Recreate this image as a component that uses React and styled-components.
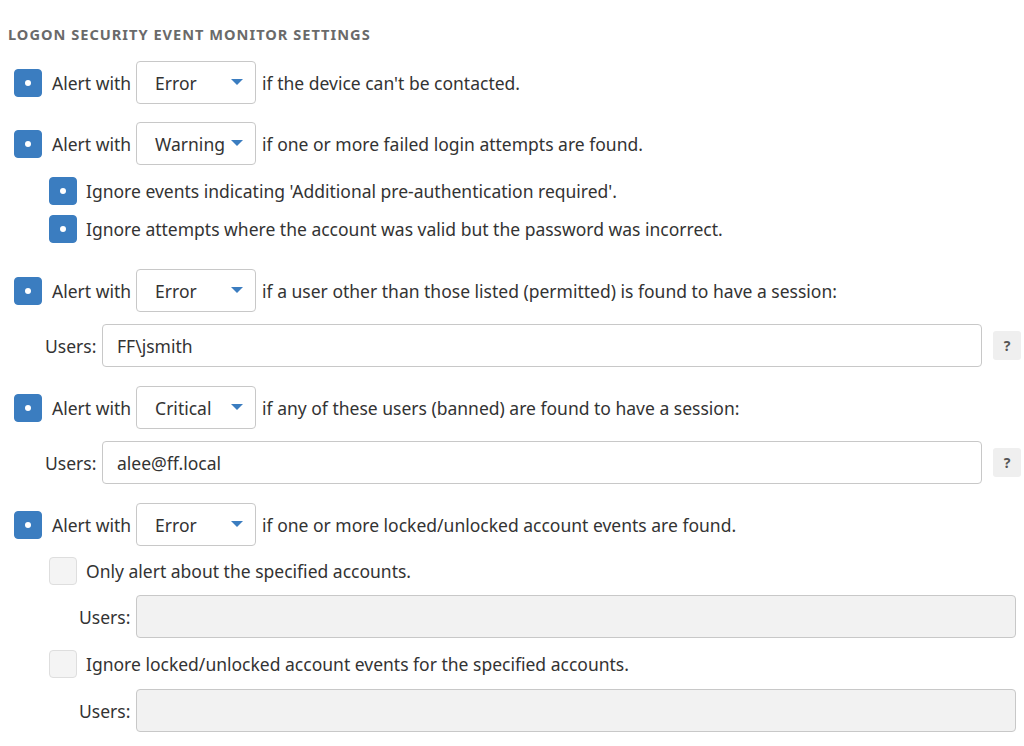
import React from "react";
import styled, { createGlobalStyle } from "styled-components";

const Global = createGlobalStyle`
  html, body { margin: 0; padding: 0; background: #fff; }
  body { font-family: "Noto Sans", "Open Sans", Arial, sans-serif; color: #333; }
`;

const Page = styled.div`
  width: 1024px;
  height: 746px;
  box-sizing: border-box;
  padding: 26px 0 0 8px;
  display: flex;
  flex-direction: column;
  overflow: hidden;
`;

const Heading = styled.h2`
  margin: 0;
  font-size: 14.6px;
  line-height: 16px;
  font-weight: 700;
  letter-spacing: 1px;
  color: #6a6a6a;
  text-transform: uppercase;
`;

const Row = styled.div`
  display: flex;
  align-items: center;
  height: ${(p) => p.$h || 43}px;
  margin-top: ${(p) => p.$mt || 0}px;
  padding-left: ${(p) => p.$indent || 0}px;
  font-size: 17.5px;
  white-space: nowrap;
`;

const Box = styled.span`
  width: 28px;
  height: 28px;
  box-sizing: border-box;
  border-radius: 4px;
  flex: none;
  display: flex;
  align-items: center;
  justify-content: center;
  background: ${(p) => (p.$checked ? "#3b7dc0" : "#f4f4f4")};
  border: 1px solid ${(p) => (p.$checked ? "#3b7dc0" : "#dedede")};
  &::after {
    content: "";
    display: ${(p) => (p.$checked ? "block" : "none")};
    width: 6px;
    height: 6px;
    border-radius: 50%;
    background: #fff;
  }
`;

const Label = styled.span`
  margin-left: ${(p) => p.$ml ?? 10}px;
`;

const Select = styled.div`
  width: 120px;
  height: 43px;
  box-sizing: border-box;
  border: 1px solid #c8c8c8;
  border-radius: 4px;
  background: #fff;
  display: flex;
  align-items: center;
  justify-content: space-between;
  padding: 0 12px 0 18px;
  flex: none;
  margin: 0 6px 0 5px;
`;

const Caret = styled.span`
  width: 0;
  height: 0;
  border-left: 6px solid transparent;
  border-right: 6px solid transparent;
  border-top: 6px solid #3b7dc0;
  margin-top: -1px;
`;

const UsersLabel = styled.span`
  width: ${(p) => p.$w}px;
  flex: none;
`;

const Input = styled.div`
  height: 43px;
  box-sizing: border-box;
  border: 1px solid #c8c8c8;
  border-radius: 4px;
  background: ${(p) => (p.$disabled ? "#f2f2f2" : "#fff")};
  width: ${(p) => p.$w}px;
  display: flex;
  align-items: center;
  padding-left: 14px;
  flex: none;
`;

const Help = styled.span`
  width: 28px;
  height: 29px;
  margin-left: 11px;
  border-radius: 3px;
  background: #efefef;
  color: #555;
  font-size: 14px;
  font-weight: 700;
  display: flex;
  align-items: center;
  justify-content: center;
  flex: none;
`;

function Alert({ level, text, mt }) {
  return (
    <Row $mt={mt} $indent={6}>
      <Box $checked />
      <Label>Alert with</Label>
      <Select>
        <span>{level}</span>
        <Caret />
      </Select>
      <span>{text}</span>
    </Row>
  );
}

function Sub({ checked, text, mt }) {
  return (
    <Row $h={38} $mt={mt} $indent={41}>
      <Box $checked={checked} />
      <Label $ml={9}>{text}</Label>
    </Row>
  );
}

function Users({ value, nested, mt }) {
  if (nested) {
    return (
      <Row $mt={mt} $indent={71}>
        <UsersLabel $w={57}>Users:</UsersLabel>
        <Input $disabled $w={880} />
      </Row>
    );
  }
  return (
    <Row $mt={mt} $indent={37}>
      <UsersLabel $w={57}>Users:</UsersLabel>
      <Input $w={880}>{value}</Input>
      <Help>?</Help>
    </Row>
  );
}

export default function App() {
  return (
    <Page>
      <Global />
      <Heading>Logon Security Event Monitor Settings</Heading>
      <Alert mt={19} level="Error" text="if the device can't be contacted." />
      <Alert mt={18} level="Warning" text="if one or more failed login attempts are found." />
      <Sub mt={7} checked text="Ignore events indicating 'Additional pre-authentication required'." />
      <Sub checked text="Ignore attempts where the account was valid but the password was incorrect." />
      <Alert mt={21} level="Error" text="if a user other than those listed (permitted) is found to have a session:" />
      <Users mt={12} value="FF\jsmith" />
      <Alert mt={19} level="Critical" text="if any of these users (banned) are found to have a session:" />
      <Users mt={12} value="alee@ff.local" />
      <Alert mt={19} level="Error" text="if one or more locked/unlocked account events are found." />
      <Sub mt={6} text="Only alert about the specified accounts." />
      <Users mt={5} nested />
      <Sub mt={7} text="Ignore locked/unlocked account events for the specified accounts." />
      <Users mt={6} nested />
    </Page>
  );
}
